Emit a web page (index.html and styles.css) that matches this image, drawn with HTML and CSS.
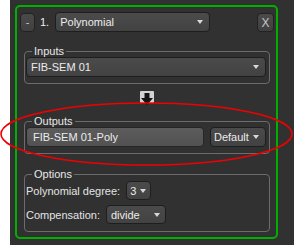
FILE: index.html
```html
<!DOCTYPE html>
<html>
<head>
    <meta charset="UTF-8">
    <title>Filter step</title>
    <link rel="stylesheet" href="styles.css">
</head>
<body>
    <div class="screen">
        <div class="panel">
            <div class="top-row">
                <button class="tool-btn minus-btn">-</button>
                <span class="step">1.</span>
                <div class="combo method-combo"><span>Polynomial</span><i class="caret"></i></div>
                <button class="tool-btn close-btn">X</button>
            </div>

            <fieldset class="group">
                <legend>Inputs</legend>
                <div class="combo"><span>FIB-SEM 01</span><i class="caret"></i></div>
            </fieldset>

            <!-- стрелка между входом и выходом -->
            <div class="flow-arrow">
                <svg width="14" height="15" viewBox="0 0 14 15">
                    <rect x="0" y="0" width="14" height="12" rx="1" fill="#d2d2d2"/>
                    <polygon points="4.5,2 9.5,2 9.5,7 13,7 7,14 1,7 4.5,7" fill="#141414"/>
                </svg>
            </div>

            <fieldset class="group">
                <legend>Outputs</legend>
                <div class="output-row">
                    <div class="line-edit">FIB-SEM 01-Poly</div>
                    <div class="combo mode-combo"><span>Default</span><i class="caret"></i></div>
                </div>
            </fieldset>

            <fieldset class="group options">
                <legend>Options</legend>
                <div class="option-row">
                    <label>Polynomial degree:</label>
                    <div class="combo degree-combo"><span>3</span><i class="caret"></i></div>
                </div>
                <div class="option-row">
                    <label>Compensation:</label>
                    <div class="combo comp-combo"><span>divide</span><i class="caret"></i></div>
                </div>
            </fieldset>
        </div>
    </div>

    <!-- выделение красным -->
    <svg class="highlight" width="294" height="245" viewBox="0 0 294 245">
        <ellipse cx="146.5" cy="134" rx="145.5" ry="31" fill="none" stroke="#f00000" stroke-width="1.6"/>
    </svg>
</body>
</html>
```

FILE: styles.css
```css
body {
    margin: 0;
    background: #fff;
    font-family: "Liberation Sans", Arial, sans-serif;
    font-size: 11px;
    color: #e4e4e4;
    position: relative;
}

.screen {
    margin-left: 10px;
    height: 245px;
    padding: 5px 16px 0 5px;
    box-sizing: border-box;
    background: #313131;
}

.panel {
    height: 234px;
    box-sizing: border-box;
    border: 2px solid #00b000;
    border-radius: 5px;
    padding: 5px 2px 0 3px;
}

.top-row {
    display: flex;
    align-items: center;
    height: 20px;
}

.tool-btn {
    padding: 0;
    height: 19px;
    border: 1px solid #222;
    border-radius: 4px;
    background: linear-gradient(#4a4a4a, #404040);
    color: #c4c4c4;
    font-family: "Liberation Sans", Arial, sans-serif;
    font-size: 11px;
}

.minus-btn {
    width: 15px;
}

.close-btn {
    width: 17px;
    margin-left: auto;
    margin-top: 1px;
    font-size: 12px;
}

.step {
    margin: 0 6px 0 5px;
    color: #f0f0f0;
}

.combo {
    height: 20px;
    box-sizing: border-box;
    display: flex;
    align-items: center;
    justify-content: space-between;
    padding: 0 6px 0 4px;
    border: 1px solid #1e1e1e;
    border-radius: 4px;
    background: linear-gradient(#4b4b4b, #424242);
    color: #ececec;
}

.caret {
    width: 0;
    height: 0;
    border-left: 3px solid transparent;
    border-right: 3px solid transparent;
    border-top: 4px solid #d8d8d8;
}

.method-combo {
    width: 155px;
}

.group {
    margin: 13px 4px 0;
    padding: 0 3px 6px 1px;
    border: 1px solid #6c6c6c;
    border-radius: 4px;
}

.group legend {
    margin-left: 6px;
    padding: 0 2px;
    line-height: 12px;
    color: #e8e8e8;
}

.flow-arrow {
    display: flex;
    justify-content: center;
    height: 15px;
    margin: 7px 0 -4px;
}

.output-row {
    display: flex;
    gap: 6px;
}

.line-edit {
    flex-grow: 1;
    height: 20px;
    box-sizing: border-box;
    padding: 0 6px;
    line-height: 18px;
    border: 1px solid #262626;
    border-radius: 4px;
    background: linear-gradient(#5c5c5c, #515151);
    color: #ececec;
}

.mode-combo {
    width: 56px;
    padding-left: 3px;
}

.options {
    margin-top: 14px;
    padding-bottom: 7px;
}

.option-row {
    display: flex;
    align-items: center;
    gap: 6px;
    height: 19px;
    margin-top: 1px;
}

.option-row + .option-row {
    margin-top: 5px;
}

.option-row .combo {
    height: 19px;
}

.degree-combo {
    width: 25px;
    padding: 0 4px 0 3px;
}

.comp-combo {
    width: 60px;
    padding: 0 5px 0 4px;
}

.highlight {
    position: absolute;
    top: 0;
    left: 0;
    pointer-events: none;
}
```
